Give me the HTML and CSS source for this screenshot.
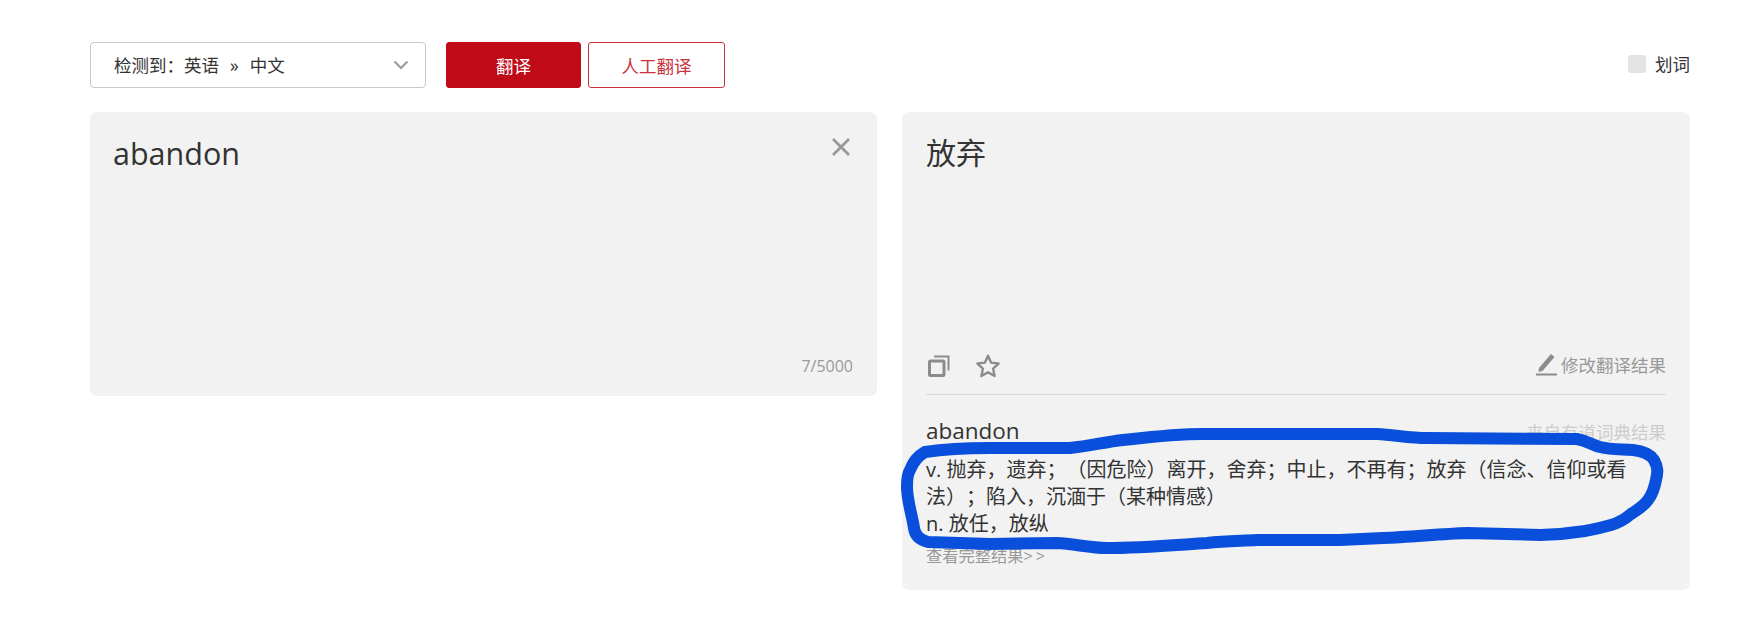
FILE: index.html
```html
<!DOCTYPE html>
<html lang="zh-CN">

<head>
    <meta charset="UTF-8">
    <title>翻译</title>
    <link rel="stylesheet" href="styles.css">
</head>

<body>
    <div class="toolbar">
        <div class="lang-select">
            <span class="lang-label">检测到：英语<span class="arrow">»</span>中文</span>
            <svg class="chevron" width="16" height="10" viewBox="0 0 16 10">
                <path d="M1.5 1.5 L8 8 L14.5 1.5" fill="none" stroke="#999" stroke-width="2" />
            </svg>
        </div>
        <button class="btn btn-primary">翻译</button>
        <button class="btn btn-outline">人工翻译</button>
        <label class="word-pick"><span class="checkbox"></span>划词</label>
    </div>

    <div class="panels">
        <div class="panel panel-input">
            <div class="main-text">abandon</div>
            <svg class="close" width="20" height="20" viewBox="0 0 20 20">
                <path d="M2 2 L18 18 M18 2 L2 18" fill="none" stroke="#999" stroke-width="2.8" />
            </svg>
            <div class="counter">7/5000</div>
        </div>

        <div class="panel panel-output">
            <div class="main-text result-text">放弃</div>
            <div class="actions">
                <svg class="action-icon copy" width="24" height="24" viewBox="0 0 24 24">
                    <rect x="2.5" y="7" width="14.5" height="14.5" rx="1" fill="none" stroke="#8c8c8c" stroke-width="3" />
                    <path d="M7 2.5 H21.5 V16.5" fill="none" stroke="#8c8c8c" stroke-width="2" />
                </svg>
                <svg class="action-icon" width="26" height="26" viewBox="0 0 24 24">
                    <path d="M12 2.5 L14.9 8.9 L21.8 9.7 L16.7 14.4 L18.1 21.3 L12 17.8 L5.9 21.3 L7.3 14.4 L2.2 9.7 L9.1 8.9 Z" fill="none" stroke="#8c8c8c" stroke-width="2.2" stroke-linejoin="round" />
                </svg>
                <a class="edit-link" href="#">
                    <svg width="21" height="24" viewBox="0 0 21 24">
                        <path d="M3 16 L15 2 L18.5 5 L6.5 19 L2.5 20 Z" fill="#8c8c8c" />
                        <rect x="0" y="21.5" width="21" height="2" fill="#8c8c8c" />
                    </svg>
                    修改翻译结果
                </a>
            </div>
            <div class="dict">
                <div class="dict-head">
                    <span class="dict-word">abandon</span>
                    <span class="dict-source">来自有道词典结果</span>
                </div>
                <div class="dict-body">
                    <div class="dict-line">v. 抛弃，遗弃；（因危险）离开，舍弃；中止，不再有；放弃（信念、信仰或看<br>法）；陷入，沉湎于（某种情感）</div>
                    <div class="dict-line">n. 放任，放纵</div>
                </div>
                <a class="dict-more" href="#">查看完整结果<span class="more-arrows">&gt;&gt;</span></a>
            </div>
        </div>
    </div>

    <!-- hand drawn marker ring on top of the screenshot -->
    <svg class="marker" width="1754" height="620" viewBox="0 0 1754 620">
        <path d="M925 452 C945 449 970 448 990 448 L1070 448 C1090 446 1105 442 1123 440 C1150 437 1175 434 1203 434 L1377 434 C1395 435 1410 438 1427 438 L1577 439 C1588 441 1592 445 1600 447 C1612 450 1622 449 1633 450 C1643 451 1650 454 1654 460 C1658 467 1658 472 1656 480 C1654 490 1652 495 1648 500 C1643 507 1638 509 1631 514 C1624 520 1618 523 1611 525 C1600 528 1590 531 1577 532 C1565 534 1552 535 1540 535 L1467 533 C1440 534 1410 537 1383 538 L1340 540 L1257 540 C1240 541 1225 541 1207 543 C1175 545 1140 548 1107 548 C1090 548 1075 544 1057 543 L990 544 L928 542 C920 540 915 536 914 528 C912 515 907 500 907 487 C907 478 908 473 910 470 C913 462 918 456 925 452 Z"
            fill="none" stroke="#0a4fdc" stroke-width="12" stroke-linejoin="round" />
    </svg>
</body>

</html>
```

FILE: styles.css
```css
/* General Styles */
body {
    margin: 0;
    padding: 42px 64px 0 90px;
    height: 620px;
    box-sizing: border-box;
    overflow: hidden;
    background-color: #ffffff;
    color: #333333;
    font-family: "Open Sans", "Noto Sans CJK SC", sans-serif;
    font-size: 17.5px;
    position: relative;
}

/* Top bar */
.toolbar {
    display: flex;
    align-items: center;
    height: 46px;
    margin-bottom: 24px;
}

.lang-select {
    width: 336px;
    height: 46px;
    box-sizing: border-box;
    padding: 0 16px 0 23px;
    display: flex;
    align-items: center;
    justify-content: space-between;
    border: 1px solid #c8c8c8;
    border-radius: 4px;
}

.lang-label {
    padding-bottom: 2px;
}

.arrow {
    margin: 0 11px;
}

.btn {
    height: 46px;
    box-sizing: border-box;
    border-radius: 3px;
    font-family: inherit;
    font-size: 17.5px;
    padding: 0;
}

.btn-primary {
    width: 135px;
    margin-left: 20px;
    background-color: #c00a17;
    border: 1px solid #c00a17;
    color: #ffffff;
}

.btn-outline {
    width: 137px;
    margin-left: 7px;
    background-color: #ffffff;
    border: 1px solid #c9323d;
    color: #c9323d;
}

.word-pick {
    margin-left: auto;
    padding-bottom: 3px;
    display: flex;
    align-items: center;
    gap: 9px;
}

.checkbox {
    width: 18px;
    height: 18px;
    border-radius: 3px;
    background-color: #e3e3e3;
}

/* Panels */
.panels {
    display: flex;
    align-items: flex-start;
    gap: 25px;
}

.panel {
    box-sizing: border-box;
    padding: 19px 24px;
    background-color: #f2f2f2;
    border-radius: 7px;
    position: relative;
}

.panel-input {
    width: 787px;
    height: 284px;
    padding-left: 23px;
}

.panel-output {
    width: 788px;
    height: 478px;
}

.main-text {
    font-size: 30.5px;
    line-height: 44px;
}

.close {
    position: absolute;
    top: 25px;
    right: 26px;
}

.counter {
    position: absolute;
    right: 24px;
    bottom: 19px;
    color: #999999;
    font-size: 16px;
}

.result-text {
    height: 219px;
    font-size: 30px;
}

.actions {
    display: flex;
    align-items: center;
    gap: 24px;
    height: 28px;
    padding-bottom: 16px;
    border-bottom: 1px solid #d9d9d9;
}

.action-icon {
    margin-top: 3px;
}

.copy {
    margin-left: 1px;
}

.edit-link {
    margin-left: auto;
    display: flex;
    align-items: center;
    gap: 4px;
    color: #999999;
    text-decoration: none;
}

.dict-head {
    display: flex;
    justify-content: space-between;
    align-items: center;
    margin-top: 21px;
}

.dict-word {
    font-size: 22.5px;
    line-height: 30px;
}

.dict-source {
    color: #cccccc;
}

.dict-body {
    margin-top: 10px;
}

.dict-line {
    font-size: 20px;
    line-height: 27px;
    text-spacing-trim: space-all;
}

.dict-more {
    display: block;
    margin-top: 6px;
    font-size: 16.25px;
    color: #999999;
    text-decoration: none;
}

.more-arrows {
    letter-spacing: 3px;
}

.marker {
    position: absolute;
    top: 0;
    left: 0;
}
```
